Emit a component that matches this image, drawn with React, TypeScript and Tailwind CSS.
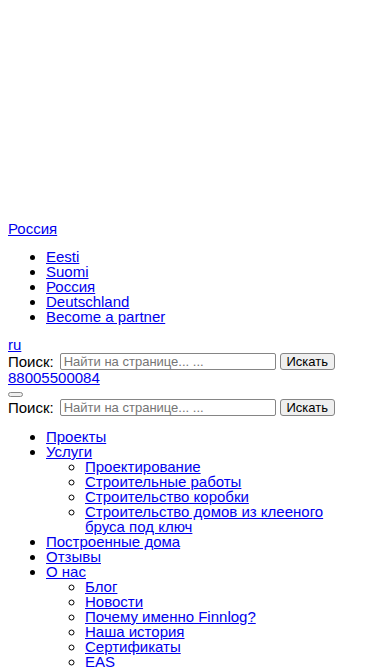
const topLangs = ["Eesti", "Suomi", "Россия", "Deutschland", "Become a partner"];

const link = "text-[#0000ee] underline";

const SearchRow = () => (
  <div className="flex items-center h-[18px]">
    <span>Поиск:</span>
    <input
      className="ml-[6px] w-[216px] h-[17px] border border-[#858585] rounded-[2px] px-[3px] text-[13px] placeholder:text-[#757575] bg-white"
      placeholder="Найти на странице... ..."
    />
    <button className="ml-[4px] w-[55px] h-[17px] border border-[#858585] rounded-[3px] bg-[#efefef] text-[13px] leading-none">
      Искать
    </button>
  </div>
);

const menu: { title: string; sub?: string[] }[] = [
  { title: "Проекты" },
  {
    title: "Услуги",
    sub: [
      "Проектирование",
      "Строительные работы",
      "Строительство коробки",
      "Строительство домов из клееного бруса под ключ",
    ],
  },
  { title: "Построенные дома" },
  { title: "Отзывы" },
  {
    title: "О нас",
    sub: ["Блог", "Новости", "Почему именно Finnlog?", "Наша история", "Сертификаты", "EAS"],
  },
];

export default function App() {
  return (
    <div className="px-2 text-[15px] leading-[15px] text-black bg-white font-['Liberation_Sans',Arial,sans-serif] overflow-hidden h-[667px]">
      <div className="h-[221px]" />
      <a href="#" className={link}>
        Россия
      </a>
      <ul className="list-disc pl-[38px] my-[13px]">
        {topLangs.map((l) => (
          <li key={l}>
            <a href="#" className={link}>
              {l}
            </a>
          </li>
        ))}
      </ul>
      <a href="#" className={link}>
        ru
      </a>
      <SearchRow />
      <div>
        <a href="#" className={link}>
          88005500084
        </a>
      </div>
      <div className="pt-[7px] pb-[1px]">
        <button className="block w-[15px] h-[5px] border border-[#858585] rounded-[3px] bg-[#efefef]" />
      </div>
      <SearchRow />
      <ul className="list-disc pl-[38px] my-[13px]">
        {menu.map((m) => (
          <li key={m.title}>
            <a href="#" className={link}>
              {m.title}
            </a>
            {m.sub && (
              <ul className="list-[circle] pl-[39px]">
                {m.sub.map((s) => (
                  <li key={s}>
                    <a href="#" className={link}>
                      {s}
                    </a>
                  </li>
                ))}
              </ul>
            )}
          </li>
        ))}
      </ul>
    </div>
  );
}
